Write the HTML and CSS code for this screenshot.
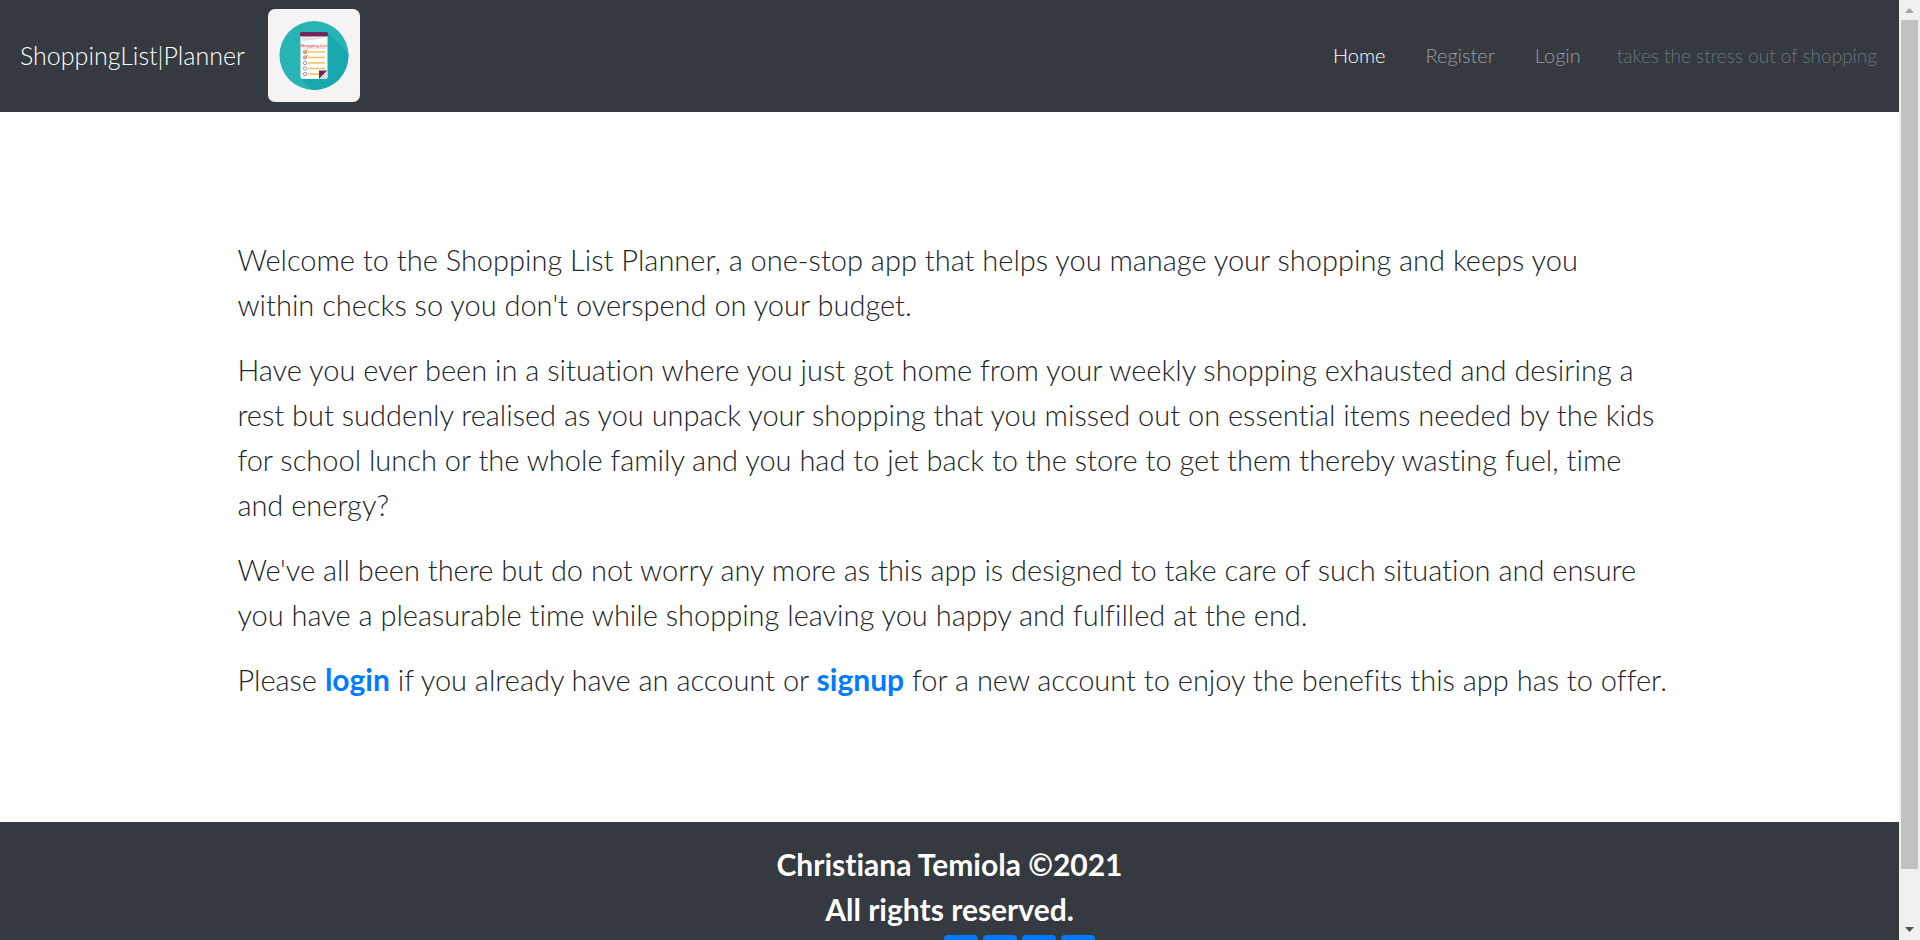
FILE: index.html
```html
<!DOCTYPE html>
<html lang="en">
<head>
<meta charset="utf-8">
<title>ShoppingList|Planner</title>
<link rel="stylesheet" href="styles.css">
</head>
<body>
<div class="window">
  <div class="page">
    <header class="navbar">
      <a class="brand" href="#">ShoppingList|Planner</a>
      <svg class="logo" viewBox="0 0 92 93" role="img" aria-label="Shopping list">
        <rect width="92" height="93" rx="7" fill="#f5f3f4"/>
        <clipPath id="disc"><circle cx="46" cy="46.500" r="34.500"/></clipPath>
        <g clip-path="url(#disc)">
          <rect width="92" height="93" fill="#28b4b5"/>
          <path d="M60 24 L92 56 V93 H56 L33 70 Z" fill="#18a7ad"/>
        </g>
        <path d="M32.500 26 H59.500 V68 Q59.500 70 57.500 70 H34.500 Q32.500 70 32.500 68 Z" fill="#fff"/>
        <path d="M34 28.500 H57 L51 30 L43 31 L35 32 Z" fill="#dedede"/>
        <rect x="32" y="23" width="28" height="4.500" rx="1.500" fill="#722659"/>
        <text x="46" y="38" text-anchor="middle" class="logo-title">Shopping List</text>
        <path d="M34.500 39 H58" stroke="#eea0ad" stroke-width="0.700"/>
        <path d="M40 43 H57 M40 48.500 H57 M40 54 H57 M40 59.500 H57 M40 65 H51" stroke="#f1c35b" stroke-width="1.300"/>
        <g fill="#fff" stroke="#a780a4" stroke-width="0.900">
          <circle cx="37" cy="43" r="1.700"/><circle cx="37" cy="48.500" r="1.700"/><circle cx="37" cy="54" r="1.700"/><circle cx="37" cy="59.500" r="1.700"/><circle cx="37" cy="65" r="1.700"/>
        </g>
        <path d="M36 42.500 L37.300 43.700 L39.800 40.500 M36 48 L37.300 49.200 L39.800 46" fill="none" stroke="#e99c35" stroke-width="1.100"/>
        <path d="M51 61.500 H59.500 L51 70 Z" fill="#722659"/>
        <path d="M59.500 61.500 V68 Q59.500 70 57.500 70 H51 Z" fill="#ddd8dc"/>
      </svg>
      <nav class="links">
        <a class="link active" href="#">Home</a>
        <a class="link" href="#">Register</a>
        <a class="link" href="#">Login</a>
        <span class="tagline">takes the stress out of shopping</span>
      </nav>
    </header>
    <main class="intro">
      <p>Welcome to the Shopping List Planner, a one-stop app that helps you manage your shopping and keeps you within checks so you don't overspend on your budget.</p>
      <p>Have you ever been in a situation where you just got home from your weekly shopping exhausted and desiring a rest but suddenly realised as you unpack your shopping that you missed out on essential items needed by the kids for school lunch or the whole family and you had to jet back to the store to get them thereby wasting fuel, time and energy?</p>
      <p>We've all been there but do not worry any more as this app is designed to take care of such situation and ensure you have a pleasurable time while shopping leaving you happy and fulfilled at the end.</p>
      <p class="call">Please <a href="#">login</a> if you already have an account or <a href="#">signup</a> for a new account to enjoy the benefits this app has to offer.</p>
    </main>
    <footer class="footer">
      <p>Christiana Temiola ©2021</p>
      <p>All rights reserved.</p>
      <ul class="social">
        <li><a href="#" aria-label="Facebook"></a></li>
        <li><a href="#" aria-label="Twitter"></a></li>
        <li><a href="#" aria-label="Instagram"></a></li>
        <li><a href="#" aria-label="LinkedIn"></a></li>
      </ul>
    </footer>
  </div>
  <div class="scrollbar" aria-hidden="true">
    <svg class="arrow" viewBox="0 0 21 20"><path d="M6 13 H15 L10.500 8 Z" fill="#a3a3a3"/></svg>
    <div class="track"><div class="thumb"></div></div>
    <svg class="arrow" viewBox="0 0 21 20"><path d="M6 7 H15 L10.500 12 Z" fill="#505050"/></svg>
  </div>
</div>
</body>
</html>
```
FILE: styles.css
```css
* { box-sizing: border-box; }
body {
  margin: 0;
  font-family: Lato, "Liberation Sans", sans-serif;
  font-weight: 300;
  font-variant-ligatures: none;
  color: #212529;
  background: #fff;
}
p { margin: 0; }
a { text-decoration: none; }
.window { display: flex; height: 100vh; overflow: hidden; }
.page { flex: 1; overflow: hidden; }
.navbar {
  display: flex;
  align-items: center;
  padding: 9px 20px 10px;
  background: #343a40;
}
.brand { font-size: 25px; color: #fff; margin-right: 23px; padding-bottom: 2px; }
.logo { width: 92px; height: 93px; }
.logo-title { font: bold 4px "Liberation Sans", sans-serif; fill: #df5d72; }
.links { display: flex; align-items: baseline; margin-left: auto; padding-bottom: 2px; font-size: 20px; }
.link { padding: 10px 20px; color: #9a9da0; }
.link.active { color: #fff; }
.tagline { margin-left: 16px; padding-right: 2px; font-size: 19px; color: #6c757d; }
.intro {
  display: flex;
  flex-direction: column;
  gap: 20px;
  width: 75%;
  margin: 0 auto;
  padding: 125px 0 120px;
  font-size: 29px;
  line-height: 45px;
}
.call { margin-right: -10px; }
.intro a { font-size: 30px; line-height: 1; font-weight: 700; color: #007bff; }
.footer {
  padding: 20px 0;
  background: #343a40;
  color: #fff;
  font-size: 30px;
  font-weight: 700;
  line-height: 45px;
  text-align: center;
}
.social {
  display: flex;
  justify-content: center;
  gap: 5px;
  margin: 3px 0 0;
  padding: 0 0 0 140px;
  list-style: none;
}
.social a { display: block; width: 34px; height: 34px; border-radius: 4px; background: #007bff; }
.scrollbar { display: flex; flex-direction: column; width: 21px; background: #f0f0f0; }
.arrow { height: 20px; }
.track { flex: 1; padding: 0 2px; }
.thumb { height: 94.3%; background: #c1c1c1; }
```
